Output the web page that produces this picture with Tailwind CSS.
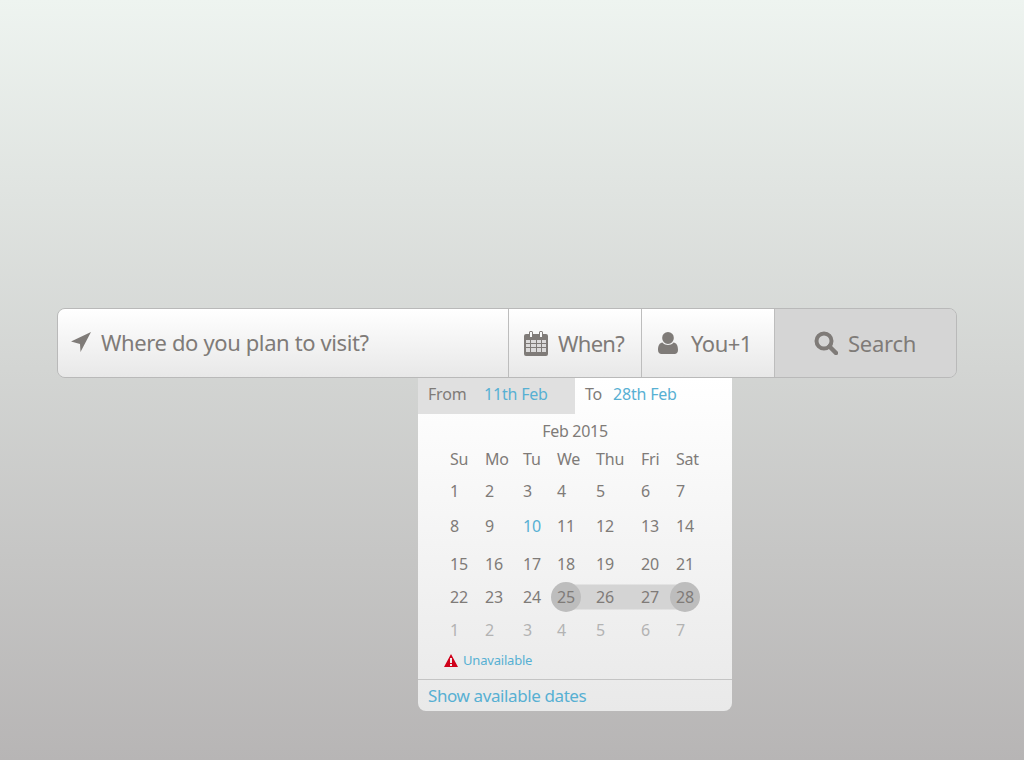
<!DOCTYPE html>
<html>
<head>
<meta charset="utf-8">
<script src="https://cdn.jsdelivr.net/npm/@tailwindcss/browser@4"></script>
</head>
<body class="m-0">
<div class="w-[1024px] h-[760px] overflow-hidden bg-gradient-to-b from-[#eef4f0] to-[#b7b5b5] pt-[308px] pl-[57px] font-['Noto_Sans',sans-serif] text-[#7f7b78]">
  <div class="flex w-[900px] h-[70px] rounded-lg border border-[#b9b9b9] overflow-hidden">
    <div class="w-[451px] flex items-center pl-[13px] pb-[2px] border-r border-[#bdbdbd] bg-gradient-to-b from-white to-[#e8e8e8]">
      <svg class="w-[20px] h-[20px] mr-[10px]" viewBox="0 0 20 20"><path fill="#7f7b78" d="M20 0 L9.500 20 L9 12 L0 9.500 Z"/></svg>
      <span class="text-[22px] tracking-[-0.38px]">Where do you plan to visit?</span>
    </div>
    <div class="w-[133px] flex items-center pl-[15px] border-r border-[#bdbdbd] bg-gradient-to-b from-white to-[#e8e8e8]">
      <svg class="w-[24px] h-[25px] mr-[10px]" viewBox="0 0 24 25"><path fill="#7f7b78" fill-rule="evenodd" d="M2 3h3V1.500A1.500 1.500 0 0 1 6.500 0h1A1.500 1.500 0 0 1 9 1.500V3h6V1.500A1.500 1.500 0 0 1 16.500 0h1A1.500 1.500 0 0 1 19 1.500V3h3a2 2 0 0 1 2 2v18a2 2 0 0 1-2 2H2a2 2 0 0 1-2-2V5a2 2 0 0 1 2-2ZM6 1v5h2V1ZM16 1v5h2V1Z"/><path fill="#f2f2f2" opacity="0.8" d="M2 9v3h4V9Zm5 0v3h5V9Zm6 0v3h4V9Zm5 0v3h4V9ZM2 13v3h4v-3Zm5 0v3h5v-3Zm6 0v3h4v-3Zm5 0v3h4v-3ZM2 17v4h4v-4Zm5 0v4h5v-4Zm6 0v4h4v-4Zm5 0v4h4v-4Z"/></svg>
      <span class="text-[22px] tracking-[-0.7px]">When?</span>
    </div>
    <div class="w-[133px] flex items-center pl-[16px] border-r border-[#bdbdbd] bg-gradient-to-b from-white to-[#e8e8e8]">
      <svg class="w-[20px] h-[22px] mr-[13px]" viewBox="0 0 20 22"><path fill="#7f7b78" d="M10 0a5.800 5.800 0 0 1 5.800 6A5.800 5.800 0 0 1 10 12 5.800 5.800 0 0 1 4.200 6 5.800 5.800 0 0 1 10 0ZM4.500 10.500C6 12.300 8 13 10 13s4-.7 5.500-2.500c3 .3 4.500 3 4.500 7.500 0 2.500-1.500 4-3.500 4h-13C1.500 22 0 20.500 0 18c0-4.500 1.500-7.200 4.500-7.500Z"/></svg>
      <span class="text-[22px] tracking-[-0.5px]">You+1</span>
    </div>
    <div class="flex-1 flex items-center pl-[39px] bg-[#d5d5d5]">
      <svg class="w-[24px] h-[24px] mr-[10px]" viewBox="0 0 24 24"><circle cx="10" cy="10" r="7.500" fill="none" stroke="#7f7b78" stroke-width="4"/><path d="M15.500 15.500 22 22" stroke="#7f7b78" stroke-width="4.500" stroke-linecap="round"/></svg>
      <span class="text-[22px] tracking-[-0.25px]">Search</span>
    </div>
  </div>
  <div class="ml-[361px] w-[314px] h-[333px] rounded-b-lg overflow-hidden flex flex-col bg-gradient-to-b from-white to-[#e9e9e9] text-[16px] tracking-[-0.2px] leading-none">
    <div class="flex h-[36px] shrink-0">
      <div class="w-[157px] bg-[#e0e0e0] flex items-center pl-[10px] pb-[4px]"><span class="w-[56px]">From</span><span class="text-[#57b0d3]">11th Feb</span></div>
      <div class="flex-1 flex items-center pl-[10px] pb-[4px]"><span class="w-[28px]">To</span><span class="text-[#57b0d3]">28th Feb</span></div>
    </div>
    <div class="h-[29px] flex items-center justify-center shrink-0 pt-[5px] tracking-[-0.3px]">Feb 2015</div>
    <div class="ml-[32px] grid grid-cols-[35px_38px_34px_39px_45px_35px_40px] grid-rows-[32px_32px_38px_38px_28px_38px] items-center">
      <span>Su</span><span>Mo</span><span>Tu</span><span>We</span><span>Thu</span><span>Fri</span><span>Sat</span>
      <span>1</span><span>2</span><span>3</span><span>4</span><span>5</span><span>6</span><span>7</span>
      <span>8</span><span>9</span><span class="text-[#57b0d3]">10</span><span>11</span><span>12</span><span>13</span><span>14</span>
      <span>15</span><span>16</span><span>17</span><span>18</span><span>19</span><span>20</span><span>21</span>
      <span>22</span><span>23</span><span>24</span>
      <span class="relative"><i class="absolute left-[5px] top-1/2 -translate-y-1/2 w-[115px] h-[25px] bg-[#d4d4d4]"></i><i class="absolute -left-[6px] top-1/2 -translate-y-1/2 w-[30px] h-[30px] rounded-full bg-[#bdbdbd]"></i><i class="absolute left-[113px] top-1/2 -translate-y-1/2 w-[30px] h-[30px] rounded-full bg-[#bdbdbd]"></i><span class="relative">25</span></span>
      <span class="relative">26</span><span class="relative">27</span><span class="relative">28</span>
      <span class="text-[#b3b3b3]">1</span><span class="text-[#b3b3b3]">2</span><span class="text-[#b3b3b3]">3</span><span class="text-[#b3b3b3]">4</span><span class="text-[#b3b3b3]">5</span><span class="text-[#b3b3b3]">6</span><span class="text-[#b3b3b3]">7</span>
    </div>
    <div class="ml-[26px] flex items-center h-[22px] text-[13px] tracking-[-0.2px] text-[#57b0d3]">
      <svg class="w-[14px] h-[13px] mr-[5px]" viewBox="0 0 14 13"><path fill="#d0021b" fill-rule="evenodd" d="M7 0 14 13H0ZM6 4v5h2V4ZM6 10v2h2v-2Z"/></svg>
      Unavailable
    </div>
    <div class="mt-auto h-[32px] shrink-0 border-t border-[#c4c4c4] flex items-center pl-[10px] text-[17px] tracking-[-0.4px] text-[#57b0d3]">Show available dates</div>
  </div>
</div>
</body>
</html>
